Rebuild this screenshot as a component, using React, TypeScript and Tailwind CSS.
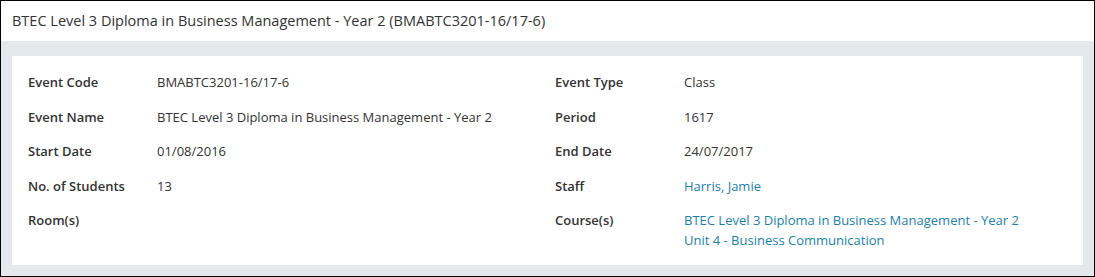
import React from 'react'

type Field = { label: string; value: string[]; link?: boolean }

const rows: [Field, Field][] = [
  [
    { label: 'Event Code', value: ['BMABTC3201-16/17-6'] },
    { label: 'Event Type', value: ['Class'] },
  ],
  [
    { label: 'Event Name', value: ['BTEC Level 3 Diploma in Business Management - Year 2'] },
    { label: 'Period', value: ['1617'] },
  ],
  [
    { label: 'Start Date', value: ['01/08/2016'] },
    { label: 'End Date', value: ['24/07/2017'] },
  ],
  [
    { label: 'No. of Students', value: ['13'] },
    { label: 'Staff', value: ['Harris, Jamie'], link: true },
  ],
  [
    { label: 'Room(s)', value: [] },
    {
      label: 'Course(s)',
      value: ['BTEC Level 3 Diploma in Business Management - Year 2', 'Unit 4 - Business Communication'],
      link: true,
    },
  ],
]

const Cell = ({ field }: { field: Field }) => (
  <div className='flex py-[7px] leading-[20px]'>
    <div className='w-[129px] shrink-0 font-semibold text-[#333]'>{field.label}</div>
    <div className='flex flex-col'>
      {field.value.map((v) => (
        <span key={v} className={field.link ? 'text-[#1a7fab] cursor-pointer hover:underline' : 'text-[#333]'}>
          {v}
        </span>
      ))}
    </div>
  </div>
)

export default function App() {
  return (
    <div
      className='w-[1095px] h-[277px] border border-black bg-[#e3e8ec] flex flex-col'
      style={{ fontFamily: '"Open Sans", "Noto Sans", sans-serif' }}
    >
      <div className='h-[40px] bg-white flex items-center px-[11px] text-[14.5px] text-[#333]'>
        BTEC Level 3 Diploma in Business Management - Year 2 (BMABTC3201-16/17-6)
      </div>
      <div className='flex-1 pt-[15px] px-[11px] pb-[11px]'>
        <div className='h-full bg-white pt-[9px] px-[16px] text-[13px] grid grid-cols-[527px_1fr] auto-rows-[34.5px] content-start'>
          {rows.map(([left, right]) => (
            <React.Fragment key={left.label}>
              <Cell field={left} />
              <Cell field={right} />
            </React.Fragment>
          ))}
        </div>
      </div>
    </div>
  )
}
